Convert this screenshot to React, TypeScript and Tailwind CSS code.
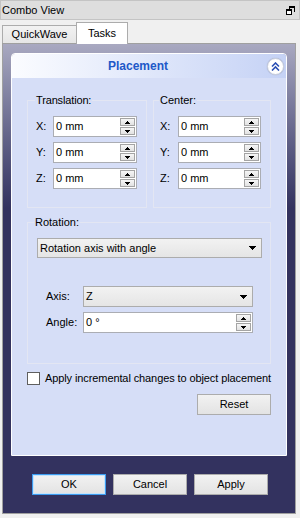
import React from "react";

function Spin() {
  return (
    <div className="flex flex-col gap-[1px] mr-[1px] ml-auto">
      <div className="w-[15px] h-[8px] border border-[#a4a4a4] bg-linear-to-b from-[#f6f6f6] to-[#e2e2e2] flex items-center justify-center">
        <svg width="5" height="3" viewBox="0 0 5 3" shapeRendering="crispEdges">
          <polygon points="2.5,0 5,3 0,3" fill="#000" />
        </svg>
      </div>
      <div className="w-[15px] h-[8px] border border-[#a4a4a4] bg-linear-to-b from-[#f6f6f6] to-[#e2e2e2] flex items-center justify-center">
        <svg width="5" height="3" viewBox="0 0 5 3" shapeRendering="crispEdges">
          <polygon points="0,0 5,0 2.5,3" fill="#000" />
        </svg>
      </div>
    </div>
  );
}

function SpinInput({ value, className = "" }: { value: string; className?: string }) {
  return (
    <div className={`h-[21px] bg-white border border-[#abadb3] flex items-center pl-[2px] ${className}`}>
      <span className="leading-[13px]">{value}</span>
      <Spin />
    </div>
  );
}

function Combo({ value, className = "" }: { value: string; className?: string }) {
  return (
    <div
      className={`border border-[#acacac] bg-linear-to-b from-[#f2f2f2] to-[#e5e5e5] flex items-center pl-[2px] pr-[5px] ${className}`}
    >
      <span className="leading-[13px]">{value}</span>
      <svg className="ml-auto" width="7" height="4" viewBox="0 0 7 4" shapeRendering="crispEdges">
        <polygon points="0,0 7,0 3.5,4" fill="#000" />
      </svg>
    </div>
  );
}

function Row({ label, labelW }: { label: string; labelW: string }) {
  return (
    <div className="flex items-center h-[21px]">
      <span className={`${labelW} leading-[13px]`}>{label}</span>
      <SpinInput value="0 mm" className="flex-1" />
    </div>
  );
}

function Button({ label, focus = false, className = "" }: { label: string; focus?: boolean; className?: string }) {
  return (
    <div
      className={`h-[21px] w-[74px] flex items-center justify-center bg-linear-to-b from-[#f2f2f2] to-[#e3e3e3] border ${
        focus ? "border-[#3c9cf0] shadow-[inset_0_0_0_1px_#c4e3fb]" : "border-[#acacac]"
      } ${className}`}
    >
      <span className="leading-[13px]">{label}</span>
    </div>
  );
}

export default function App() {
  return (
    <div className="w-[300px] h-[518px] bg-[#f0f0f0] text-black text-[11px] font-['Liberation_Sans',Arial,sans-serif] overflow-hidden">
      {/* title bar */}
      <div className="h-[20px] bg-[#dedede] border border-[#c4c4c4] flex items-center pl-[1px] pr-[4px]">
        <span className="leading-[13px]">Combo View</span>
        <svg className="ml-auto" width="9" height="9" viewBox="0 0 9 9" shapeRendering="crispEdges">
          <path d="M3 0h6v6h-1v-4h-4v1h-1z" fill="#000" />
          <rect x="0.5" y="3.5" width="5" height="5" fill="#fff" stroke="#000" />
          <rect x="0" y="3" width="6" height="2" fill="#000" />
        </svg>
      </div>

      {/* tabs */}
      <div className="h-[23px] flex items-end pl-[2px]">
        <div className="h-[18px] w-[75px] border border-b-0 border-[#acacac] bg-linear-to-b from-[#f2f2f2] to-[#e6e6e6] flex items-center justify-center">
          <span className="leading-[13px]">QuickWave</span>
        </div>
        <div className="relative z-10 -mb-px h-[22px] w-[52px] -ml-px border border-b-0 border-[#acacac] bg-white flex items-center justify-center">
          <span className="leading-[13px]">Tasks</span>
        </div>
      </div>

      {/* pane */}
      <div className="ml-[2px] w-[294px] h-[471px] border border-[#a0a0a0]">
        <div className="h-full bg-linear-to-b from-[#a9a9c1] from-0% to-[#33325f] to-35% px-[8px] pt-[9px]">
          {/* task box */}
          <div className="border border-white rounded-t-[4px]">
            <div className="h-[24px] rounded-t-[3px] bg-linear-to-r from-[#fbfcff] to-[#c5d2f5] flex items-center">
              <div className="flex-1 text-center font-bold text-[12px] text-[#2158c8] leading-[14px]">Placement</div>
              <div className="ml-[3px] mr-[2px] w-[17px] h-[17px] rounded-full bg-white border border-[#c8cede] shadow-[0_0_1px_#9aa4c0] flex items-center justify-center">
                <svg width="9" height="9" viewBox="0 0 9 9">
                  <path d="M1 4.5 L4.5 1 L8 4.5" fill="none" stroke="#2a4fb5" strokeWidth="1.6" />
                  <path d="M1 8.5 L4.5 5 L8 8.5" fill="none" stroke="#2a4fb5" strokeWidth="1.6" />
                </svg>
              </div>
            </div>
            <div className="bg-[#d6def7] px-[15px] pt-[16px] pb-[40px]">
              <div className="flex gap-[6px]">
                <fieldset className="w-[120px] border border-[#e3e6f3] pl-[8px] pr-[9px] pt-[9px] pb-[18px]">
                  <legend className="leading-[13px] px-[1px] -ml-[1px] tracking-[-0.15px]">Translation:</legend>
                  <div className="flex flex-col gap-[5px]">
                    <Row label="X:" labelW="w-[17px]" />
                    <Row label="Y:" labelW="w-[17px]" />
                    <Row label="Z:" labelW="w-[17px]" />
                  </div>
                </fieldset>
                <fieldset className="w-[118px] border border-[#e3e6f3] pl-[6px] pr-[9px] pt-[9px] pb-[18px]">
                  <legend className="leading-[13px] px-[1px] -ml-[1px]">Center:</legend>
                  <div className="flex flex-col gap-[5px]">
                    <Row label="X:" labelW="w-[18px]" />
                    <Row label="Y:" labelW="w-[18px]" />
                    <Row label="Z:" labelW="w-[18px]" />
                  </div>
                </fieldset>
              </div>

              <fieldset className="mt-[8px] border border-[#e3e6f3] pl-[9px] pr-[8px] pt-[9px] pb-[30px]">
                <legend className="leading-[13px] px-[1px] -ml-[3px]">Rotation:</legend>
                <Combo value="Rotation axis with angle" className="h-[20px]" />
                <div className="mt-[28px] pl-[9px] pr-[9px] flex flex-col gap-[5px]">
                  <div className="flex items-center">
                    <span className="w-[37px] leading-[13px]">Axis:</span>
                    <Combo value="Z" className="flex-1 h-[21px]" />
                  </div>
                  <div className="flex items-center">
                    <span className="w-[37px] leading-[13px]">Angle:</span>
                    <SpinInput value="0 °" className="flex-1" />
                  </div>
                </div>
              </fieldset>

              <div className="mt-[8px] flex items-center h-[13px]">
                <div className="shrink-0 w-[13px] h-[13px] bg-white border border-[#5f5f5f]" />
                <span className="ml-[5px] leading-[13px] whitespace-nowrap tracking-[-0.1px]">
                  Apply incremental changes to object placement
                </span>
              </div>
              <div className="mt-[9px] flex justify-end">
                <Button label="Reset" />
              </div>
            </div>
          </div>

          {/* dialog buttons */}
          <div className="mt-[18px] pl-[21px] flex gap-[7px]">
            <Button label="OK" focus />
            <Button label="Cancel" />
            <Button label="Apply" />
          </div>
        </div>
      </div>
    </div>
  );
}
